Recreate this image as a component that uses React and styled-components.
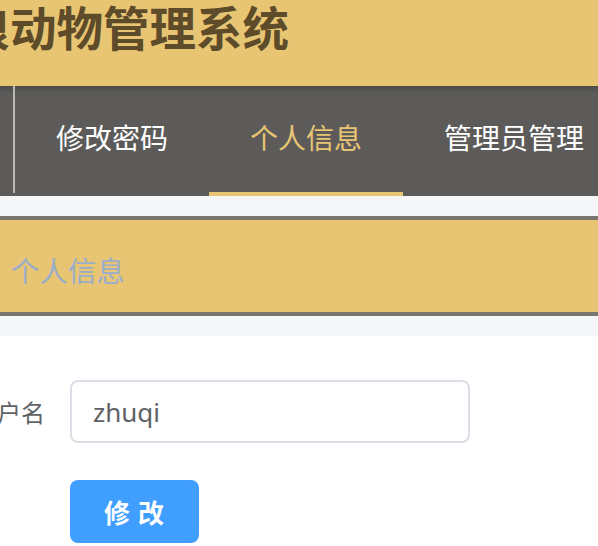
import styled, { createGlobalStyle } from 'styled-components';

const GlobalStyle = createGlobalStyle`
  html, body {
    margin: 0;
    padding: 0;
    background: #ffffff;
    overflow: hidden;
  }
  body {
    font-family: "Noto Sans", "Noto Sans CJK SC", sans-serif;
  }
`;

const Page = styled.div`
  width: 598px;
  min-height: 546px;
  overflow: hidden;
`;

const Header = styled.header`
  height: 86px;
  background: #e8c573;
  overflow: hidden;
`;

const Title = styled.h1`
  margin: 0 0 0 -83px;
  font-family: "Noto Sans CJK SC", sans-serif;
  font-size: 46.5px;
  font-weight: 700;
  line-height: 52px;
  color: #5d4b29;
  white-space: nowrap;
`;

const Nav = styled.nav`
  display: flex;
  height: 110px;
  background: #5c5b5a;
  box-shadow: inset 0 6px 6px -4px rgba(0, 0, 0, 0.25);
  padding-left: 13px;
  overflow: hidden;
`;

const Divider = styled.span`
  flex: 0 0 2px;
  height: 107px;
  background: #b9b8b6;
`;

const NavItem = styled.a`
  flex: 0 0 auto;
  box-sizing: border-box;
  display: flex;
  align-items: center;
  height: 110px;
  padding: 0 41px 4px;
  border-bottom: 4px solid ${(p) => (p.$active ? '#e8c573' : 'transparent')};
  font-family: "Noto Sans CJK SC", sans-serif;
  font-size: 28px;
  font-weight: 400;
  color: ${(p) => (p.$active ? '#e8c573' : '#ffffff')};
  white-space: nowrap;
  cursor: pointer;
`;

const Section = styled.section`
  background: #f5f6f8;
  padding: 20px 0;
`;

const Banner = styled.div`
  box-sizing: border-box;
  height: 100px;
  display: flex;
  align-items: center;
  padding: 6px 0 0 11px;
  background: #e8c573;
  border-top: 4px solid #787470;
  border-bottom: 4px solid #787470;
  font-family: "Noto Sans CJK SC", sans-serif;
  font-size: 28.5px;
  font-weight: 400;
  color: #9aadc9;
`;

const Form = styled.form`
  display: flex;
  flex-direction: column;
  gap: 37px;
  padding-top: 44px;
`;

const Row = styled.div`
  display: flex;
  align-items: center;
`;

const Label = styled.label`
  box-sizing: border-box;
  flex: 0 0 100px;
  margin-left: -30px;
  padding-right: 25px;
  text-align: right;
  font-family: "Noto Sans CJK SC", sans-serif;
  font-size: 24px;
  color: #606266;
`;

const Input = styled.input`
  box-sizing: border-box;
  width: 400px;
  height: 63px;
  padding: 0 21px;
  border: 2px solid #dcdfe6;
  border-radius: 8px;
  font-family: "Noto Sans", "Noto Sans CJK SC", sans-serif;
  font-size: 26px;
  color: #606266;
  outline: none;
`;

const Button = styled.button`
  margin-left: 70px;
  width: 129px;
  height: 63px;
  border: none;
  border-radius: 8px;
  background: #409eff;
  color: #ffffff;
  font-family: "Noto Sans CJK SC", sans-serif;
  font-size: 26px;
  font-weight: 700;
  letter-spacing: 1px;
  cursor: pointer;
`;

const items = ['修改密码', '个人信息', '管理员管理'];

export default function App() {
  return (
    <Page>
      <GlobalStyle />
      <Header>
        <Title>流浪动物管理系统</Title>
      </Header>
      <Nav>
        <Divider />
        {items.map((item) => (
          <NavItem key={item} $active={item === '个人信息'}>
            {item}
          </NavItem>
        ))}
      </Nav>
      <Section>
        <Banner>个人信息</Banner>
      </Section>
      <Form onSubmit={(e) => e.preventDefault()}>
        <Row>
          <Label>用户名</Label>
          <Input defaultValue="zhuqi" />
        </Row>
        <Button type="submit">修 改</Button>
      </Form>
    </Page>
  );
}
